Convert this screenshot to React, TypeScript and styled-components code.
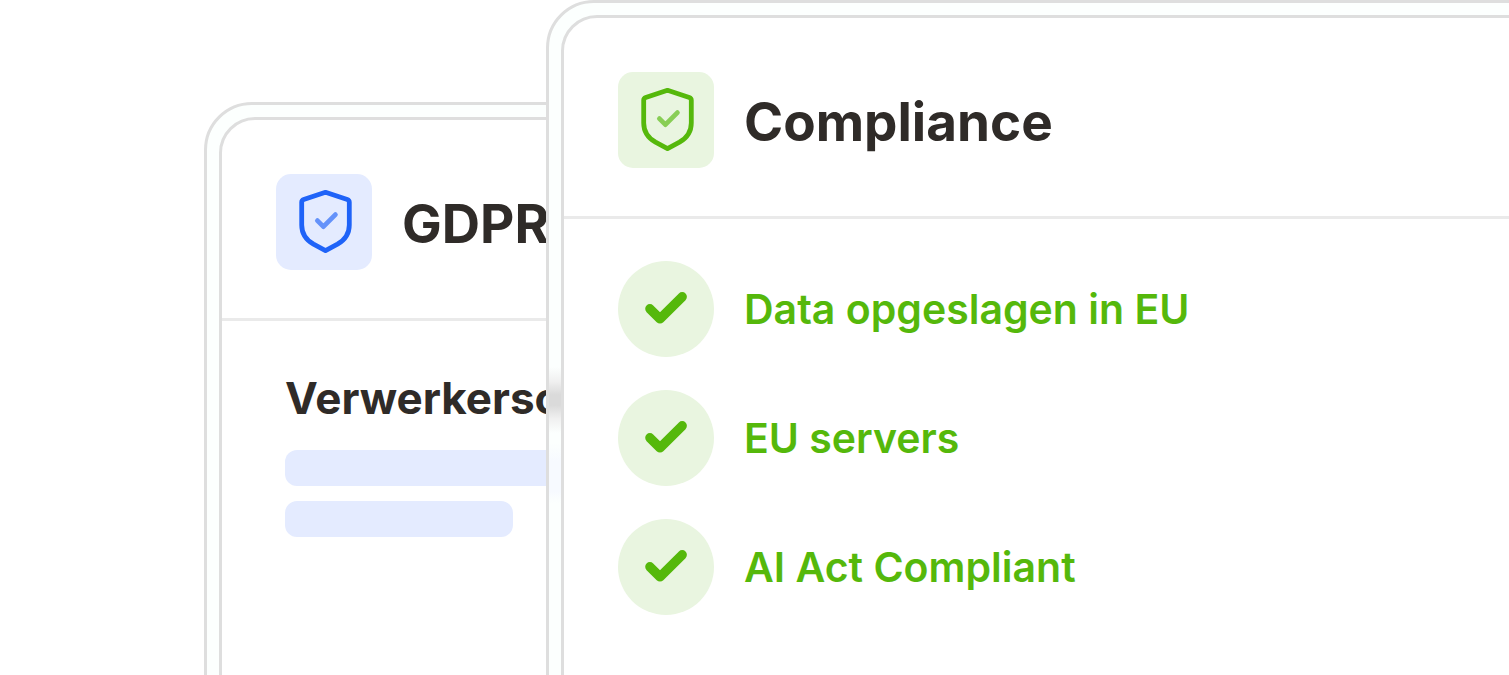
import React from "react";
import styled, { createGlobalStyle, css } from "styled-components";

const GlobalStyle = createGlobalStyle`
  * { box-sizing: border-box; }
  body {
    margin: 0;
    background: #fff;
    color: #2f2b28;
    font-family: Inter, "Liberation Sans", sans-serif;
  }
  h2, h3, p, ul { margin: 0; padding: 0; }
`;

type Tone = "blue" | "green";

const tones = {
  blue: { strong: "#1f63f8", soft: "#e4ebff" },
  green: { strong: "#55b80b", soft: "#e9f5e0" },
};

const Stage = styled.main`
  display: grid;
  grid-template: minmax(0, 1fr) / minmax(0, 1fr);
  height: 100vh;
  overflow: hidden;
`;

/* Soft traces of the document behind, seen through the frosted rim. */
const frosted = css`
  background-image:
    linear-gradient(rgba(216, 216, 216, 0), #f0f0f0 22%, #dadada 42%, #dadada 58%, #f0f0f0 78%, rgba(216, 216, 216, 0)),
    linear-gradient(rgba(247, 250, 255, 0), #f7faff 30%, #f7faff 80%, rgba(247, 250, 255, 0));
  background-repeat: no-repeat;
  background-size: 12px 66px, 12px 60px;
  background-position: 0 364px, 0 440px;
`;

const Frame = styled.section<{ $left: number; $top: number; $frosted?: boolean }>`
  grid-area: 1 / 1;
  z-index: 0;
  display: flex;
  margin: ${(p) => p.$top}px -60px -60px ${(p) => p.$left}px;
  padding: 12px;
  border: 3px solid #dedede;
  border-radius: 48px;
  background-color: #fcfffe;
  ${(p) => p.$frosted && frosted}
`;

const Panel = styled.div`
  flex: 1;
  min-width: 0;
  overflow: hidden;
  border: 3px solid #dedede;
  border-radius: 36px;
  background: #fff;
`;

const PanelHeader = styled.header`
  display: flex;
  align-items: center;
  gap: 30px;
  padding: 54px 54px 48px;
  border-bottom: 3px solid #eaeaea;
`;

const IconTile = styled.span<{ $tone: Tone }>`
  flex: none;
  width: 96px;
  height: 96px;
  border-radius: 15px;
  color: ${(p) => tones[p.$tone].strong};
  background: ${(p) => tones[p.$tone].soft};
`;

const Title = styled.h2`
  padding-top: 4px;
  font-size: 53px;
  line-height: 66px;
  font-weight: 700;
  white-space: nowrap;
`;

const DocumentBody = styled.div`
  display: flex;
  flex-direction: column;
  gap: 15px;
  padding: 48px 63px;
`;

const DocumentTitle = styled.h3`
  padding-bottom: 8px;
  font-size: 44px;
  line-height: 58px;
  font-weight: 700;
  white-space: nowrap;
`;

const Bar = styled.div<{ $width: number }>`
  width: ${(p) => p.$width}px;
  height: 36px;
  border-radius: 12px;
  background: ${tones.blue.soft};
`;

const CheckList = styled.ul`
  display: flex;
  flex-direction: column;
  gap: 33px;
  padding: 42px 54px;
  list-style: none;
`;

const CheckItem = styled.li`
  display: flex;
  align-items: center;
  gap: 30px;
  color: ${tones.green.strong};
  font-size: 41px;
  line-height: 50px;
  font-weight: 600;
  white-space: nowrap;
`;

const CheckBadge = styled.span`
  flex: none;
  width: 96px;
  height: 96px;
  border-radius: 50%;
  background: ${tones.green.soft};
`;

const Drawing = styled.svg`
  display: block;
  width: 96px;
  height: 96px;
  fill: none;
  stroke: currentColor;
  stroke-linecap: round;
  stroke-linejoin: round;
`;

function Shield({ tone }: { tone: Tone }) {
  return (
    <IconTile $tone={tone}>
      <Drawing viewBox="0 0 96 96" aria-hidden="true">
        <path
          strokeWidth="4.8"
          d="M49.5 18.3 L71.3 25.5 Q73.3 26.2 73.3 28.3 V51 C73.3 59.5 68.5 66.2 61.5 70.2 L49.5 76.6 L37.5 70.2 C30.5 66.2 25.7 59.5 25.7 51 V28.3 Q25.7 26.2 27.7 25.5 Z"
        />
        <path strokeWidth="4.8" opacity="0.65" d="M41.4 46.6 L47.4 52.6 L59.4 40.6" />
      </Drawing>
    </IconTile>
  );
}

const checks = ["Data opgeslagen in EU", "EU servers", "AI Act Compliant"];

export default function App() {
  return (
    <>
      <GlobalStyle />
      <Stage>
        <Frame $left={204} $top={102}>
          <Panel>
            <PanelHeader>
              <Shield tone="blue" />
              <Title>GDPR</Title>
            </PanelHeader>
            <DocumentBody>
              <DocumentTitle>Verwerkerso</DocumentTitle>
              <Bar $width={480} />
              <Bar $width={228} />
            </DocumentBody>
          </Panel>
        </Frame>
        <Frame $left={546} $top={0} $frosted>
          <Panel>
            <PanelHeader>
              <Shield tone="green" />
              <Title>Compliance</Title>
            </PanelHeader>
            <CheckList>
              {checks.map((label) => (
                <CheckItem key={label}>
                  <CheckBadge>
                    <Drawing viewBox="0 0 96 96" aria-hidden="true">
                      <path strokeWidth="9.4" d="M31.9 47.8 L42 57.8 L64.2 35.8" />
                    </Drawing>
                  </CheckBadge>
                  {label}
                </CheckItem>
              ))}
            </CheckList>
          </Panel>
        </Frame>
      </Stage>
    </>
  );
}
